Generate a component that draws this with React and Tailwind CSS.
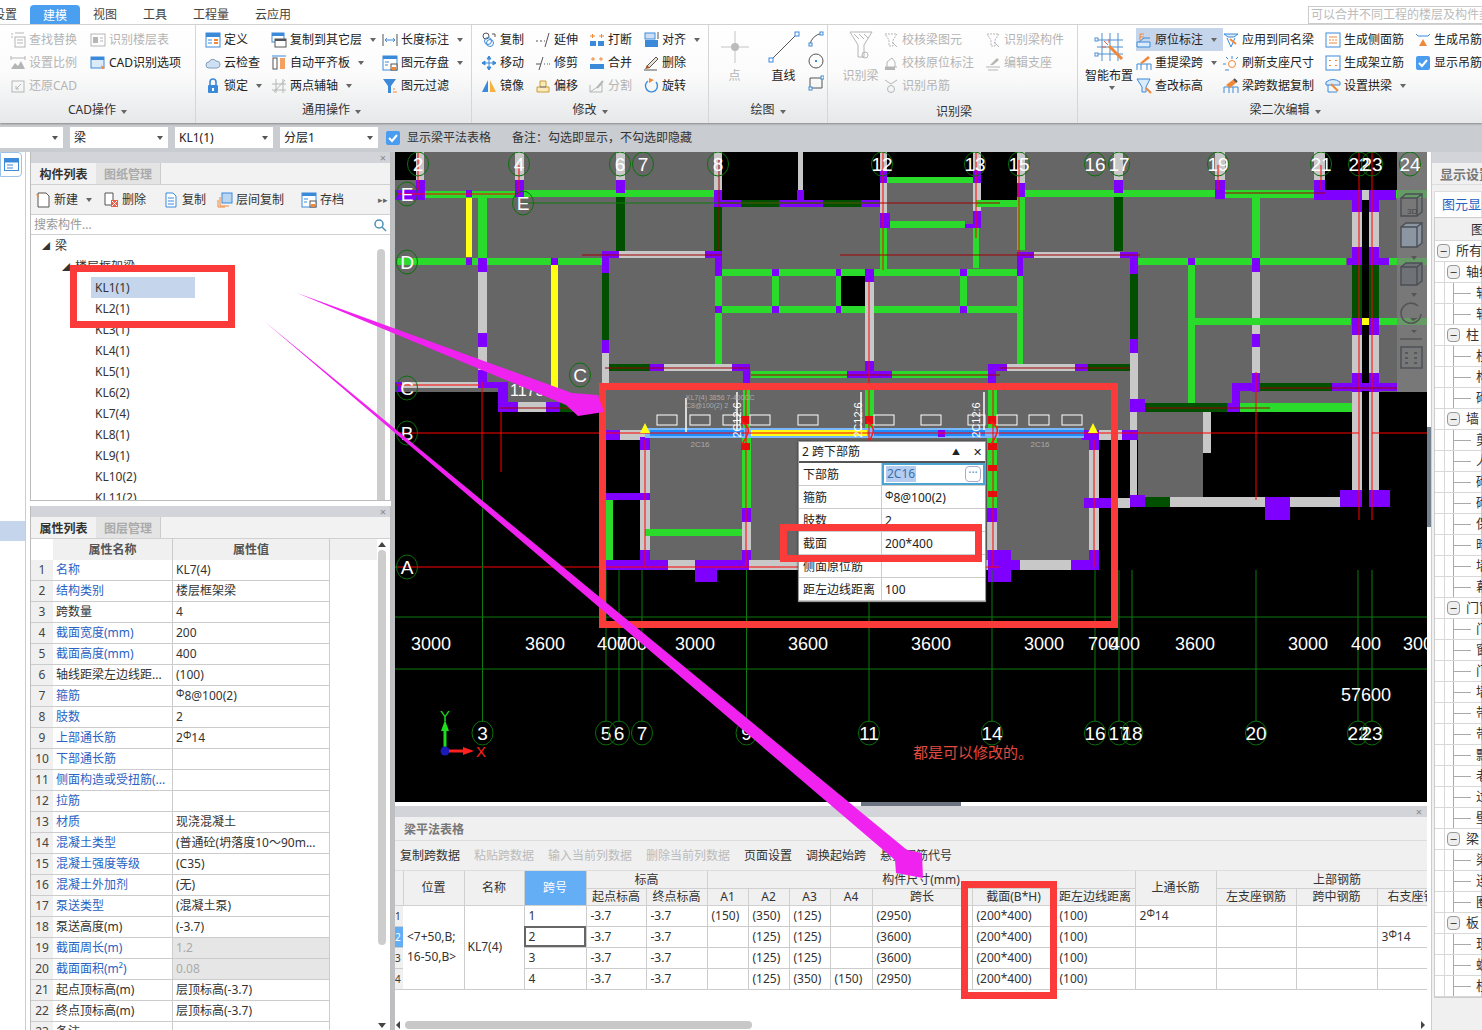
import React from "react";

const BLUE = "#3b8ad9";
const ORG = "#f0883a";
const GR = "#b5b5b5";
const DK = "#555";

// ribbon icons, all drawn on a 16x16 box
const ICONS = {
  find: <><rect x="5" y="5" width="10" height="10" fill="none" stroke={GR} /><path d="M7 8h6M7 11h6M1 2h2M1 5h2M5 1h9" stroke={GR} /></>,
  scale: <><path d="M1 14l4-6 3 3 3-5 4 8z" fill={GR} /><path d="M1 3h14M1 1v4M15 1v4" stroke={GR} /></>,
  undo: <><rect x="2" y="3" width="12" height="11" fill="none" stroke={GR} /><path d="M11 6L6 11M6 8v3h3" stroke={GR} fill="none" /></>,
  floor: <><rect x="1" y="2" width="14" height="12" fill="none" stroke={GR} /><rect x="3" y="5" width="5" height="6" fill={GR} /><path d="M10 6h3M10 9h3" stroke={GR} /></>,
  cad: <><rect x="1" y="2" width="13" height="11" fill="#dcebfa" stroke={BLUE} /><rect x="1" y="2" width="13" height="3" fill={BLUE} /><path d="M11 10l4 3-3 1z" fill={ORG} /></>,
  def: <><rect x="1" y="1" width="14" height="14" fill="#fff" stroke={BLUE} /><rect x="1" y="1" width="14" height="4" fill={BLUE} /><path d="M3 8h4M3 11h4" stroke={BLUE} /><path d="M9 8h4M9 11h4" stroke={ORG} strokeWidth="2" /></>,
  cloud: <path d="M4 13a3 3 0 010-6 4 4 0 017-1 3.5 3.5 0 011 7z" fill="#cfe0f2" stroke="#7f9dbd" />,
  lock: <><path d="M5 7V4a3 3 0 016 0v3" fill="none" stroke={BLUE} strokeWidth="1.6" /><rect x="3" y="7" width="10" height="8" rx="1" fill={BLUE} /><rect x="7" y="10" width="2" height="3" fill="#fff" /></>,
  copyf: <><rect x="1" y="1" width="12" height="9" fill="#fff" stroke={BLUE} /><rect x="1" y="1" width="12" height="3" fill={BLUE} /><rect x="4" y="7" width="11" height="8" fill="#fff" stroke={DK} /><rect x="4" y="7" width="11" height="2" fill={DK} /></>,
  align: <><rect x="2" y="3" width="4" height="11" fill="#fff" stroke={DK} /><rect x="9" y="3" width="5" height="11" fill={ORG} opacity="0.8" /><path d="M1 1h14" stroke={BLUE} /></>,
  axis: <path d="M1 12h14M1 6h14M5 1v14M12 1v14M3 14L14 2" stroke={GR} fill="none" />,
  len: <><path d="M1 2v12M15 2v12" stroke={DK} /><path d="M3 8h10M3 8l2-2M3 8l2 2M13 8l-2-2M13 8l-2 2" stroke={BLUE} fill="none" /></>,
  save: <><rect x="1" y="1" width="14" height="14" fill="#fff" stroke={BLUE} /><rect x="1" y="1" width="14" height="3" fill={BLUE} /><path d="M3 7h4M3 10h3" stroke={BLUE} /><rect x="9" y="9" width="6" height="6" fill="#fff" stroke={DK} /><rect x="10" y="12" width="4" height="3" fill={ORG} /></>,
  filter: <><path d="M1 1h13L9 8v7H6V8z" fill={BLUE} /><path d="M11 14h4M11 11h2" stroke={ORG} /></>,
  dup: <><circle cx="5" cy="4" r="3" fill="none" stroke={DK} /><circle cx="9" cy="11" r="3.5" fill="none" stroke={BLUE} /><circle cx="7" cy="9" r="3.5" fill="none" stroke={BLUE} /><path d="M11 2h3v3" stroke={DK} fill="none" /></>,
  move: <path d="M8 1v14M1 8h14M8 1L6 4h4zM8 15l-2-3h4zM1 8l3-2v4zM15 8l-3-2v4z" fill={BLUE} stroke={BLUE} />,
  mirror: <><path d="M7 2v12H1z" fill={BLUE} /><path d="M9 2v12h6z" fill="#f5b23e" /></>,
  extend: <path d="M1 9h2M5 9h2M9 9h1M14 1L10 15" stroke={DK} fill="none" />,
  trim: <path d="M1 9h5M9 9h1M12 9h1M14 9h1M8 2L4 15" stroke={DK} fill="none" />,
  offset: <><path d="M2 14V9h3V3h6v6h3v5z" fill="#fbe9b8" stroke="#c69c3c" /><path d="M5 9h6" stroke={DK} /></>,
  brk: <><rect x="1" y="9" width="6" height="5" fill={BLUE} /><rect x="9" y="9" width="6" height="5" fill={BLUE} /><path d="M1 4h5M3.5 2v4M10 4h5M12.5 2v4" stroke={ORG} /></>,
  merge: <><rect x="1" y="9" width="14" height="5" fill={BLUE} /><path d="M2 4h4M4 2v4M10 4h4M12 2v4" stroke={ORG} /></>,
  split: <><path d="M1 14h12V6L1 14zM1 14V7" fill="none" stroke={GR} /><path d="M8 10l6-7" stroke={GR} strokeWidth="2" /></>,
  alg: <><rect x="2" y="1" width="10" height="6" fill="#cfe0f5" stroke={BLUE} /><rect x="2" y="8" width="13" height="7" fill={BLUE} /><path d="M15 0v7" stroke={DK} /></>,
  erase: <><path d="M4 11l9-9 2 2-9 9z" fill="#e9e3d5" stroke={DK} /><path d="M2 14l2-4 3 3z" fill="#a8542a" /><path d="M1 15h13" stroke={DK} /></>,
  rot: <><path d="M5 3a6 6 0 108 1" fill="none" stroke={BLUE} strokeWidth="1.4" /><path d="M6 0l5 2-5 3z" fill={ORG} /></>,
  chk: <><path d="M2 2h12l-4 6v6H6V8z" fill="none" stroke={GR} strokeDasharray="2 1" /><path d="M9 10l5 5" stroke={GR} /></>,
  chk2: <><path d="M2 12h12M4 12V7l5-4 3 4v5" fill="none" stroke={GR} /><rect x="2" y="12" width="10" height="3" fill={GR} /></>,
  hang: <><path d="M2 2l6 4 6-4" fill="none" stroke={GR} /><circle cx="8" cy="11" r="3.5" fill="none" stroke={GR} /></>,
  edit: <><path d="M1 12h14M3 15h10" stroke={GR} /><path d="M5 10l7-7 2 2-6 5z" fill={GR} /></>,
  orig: <><path d="M1 10h13v5H1z" fill="#dcebfa" stroke={BLUE} /><path d="M3 10l5-4h6" fill="none" stroke={BLUE} /><path d="M4 2v6M4 2h4M4 5h4" stroke={ORG} /></>,
  lift: <><path d="M1 15V9h14v6M5 15V9M11 15V9" fill="none" stroke={BLUE} /><path d="M4 8l8-7 2 2-8 6z" fill={ORG} /></>,
  chg: <><path d="M1 1h13L10 9v5H6V9z" fill="#dcebfa" stroke={BLUE} /><path d="M10 10l5 5" stroke={ORG} strokeWidth="2" /></>,
  app: <><path d="M1 2h14l-4 3H5z" fill="#dcebfa" stroke={BLUE} /><path d="M4 6l4 9 4-9" fill="none" stroke={BLUE} /><path d="M7 7l6 5" stroke={ORG} strokeWidth="2" /></>,
  ref: <><circle cx="9" cy="9" r="3.5" fill="none" stroke={ORG} /><path d="M9 1v3M3 9H0M5 4L3 2M13 4l2-2M2 15h4" stroke={BLUE} /></>,
  cpy: <><path d="M1 15V9h14v6M6 15V9M10 15V9" fill="none" stroke={BLUE} /><path d="M3 7l8-6 3 3-7 6z" fill={ORG} /><path d="M11 1l3 3" stroke={DK} strokeWidth="2" /></>,
  side: <><rect x="1" y="1" width="14" height="14" fill="#fff" stroke={BLUE} /><path d="M4 5h8M4 11h8" stroke={ORG} /><path d="M4 8h8" stroke={ORG} strokeDasharray="2 1" /></>,
  rack: <><rect x="1" y="1" width="14" height="14" fill="#fff" stroke={BLUE} /><path d="M5 5v1M11 5v1M5 10v1M11 10v1" stroke={ORG} strokeWidth="2" /></>,
  arch: <><path d="M1 4q7-5 14 0v3H1z" fill="#dcebfa" stroke={BLUE} /><path d="M3 7v7h9" fill="none" stroke={BLUE} /><path d="M6 6l7 7" stroke={ORG} strokeWidth="2" /></>,
  hg: <><path d="M1 2l2 2h10l2-2" fill="none" stroke={BLUE} /><path d="M4 14h8L8 7z" fill={ORG} /></>,
  check: <><rect x="1" y="1" width="14" height="14" rx="2" fill="#4a9cf0" /><path d="M4 8l3 3 5-6" stroke="#fff" strokeWidth="2" fill="none" /></>,
  newd: <><path d="M3 1h8l3 3v11H3z" fill="#fff" stroke={DK} /><path d="M1 2l3 1-1 3" fill={ORG} /></>,
  del: <><path d="M2 1h8v12H2z" fill="#fff" stroke={DK} /><rect x="8" y="8" width="7" height="7" fill="#e8604c" /><path d="M9 9l5 5M14 9l-5 5" stroke="#fff" /></>,
  copyd: <><path d="M3 1h7l3 3v11H3z" fill="#fff" stroke={BLUE} /><path d="M5 6h6M5 9h6M5 12h6" stroke={BLUE} /></>,
  lay: <><rect x="5" y="1" width="10" height="10" fill="#bcd6f2" stroke={BLUE} /><path d="M3 5v9h9M1 8v7h7" fill="none" stroke={ORG} /></>,
};

const Ic = ({ n, s = 16 }) => (
  <svg width={s} height={s} viewBox="0 0 16 16" className="shrink-0">{ICONS[n]}</svg>
);

const Caret = ({ c = "#666" }) => (
  <span className="inline-block ml-[5px] w-0 h-0 border-x-[3.5px] border-x-transparent border-t-[4px]" style={{ borderTopColor: c }} />
);

const Steel = () => <span className="text-[10px] relative top-[-3px]">Φ</span>;

function RItem({ n, t, off, caret, hi }) {
  return (
    <div className={`h-[23px] flex items-center gap-[3px] whitespace-nowrap ${hi ? "bg-[#c5d6ec]" : ""} ${off ? "text-[#b4b4b4]" : "text-[#222]"}`}>
      <Ic n={n} />
      <span>{t}</span>
      {caret && <Caret />}
    </div>
  );
}

function Group({ w, pl, label, labelCls = "justify-center", children, last }) {
  return (
    <div className={`h-full flex flex-col shrink-0 ${last ? "" : "border-r border-[#d4d6d8]"}`} style={{ width: w }}>
      <div className="flex flex-1 pt-[3px]" style={{ paddingLeft: pl }}>{children}</div>
      <div className={`h-[26px] flex items-center text-[#333] ${labelCls}`}>{label}</div>
    </div>
  );
}

const Col = ({ w, items }) => (
  <div className="shrink-0" style={{ width: w }}>
    {items.map((it) => <RItem key={it.t} {...it} />)}
  </div>
);

const Big = ({ w, t, off, children, caret }) => (
  <div className={`shrink-0 flex flex-col items-center ${off ? "text-[#b4b4b4]" : "text-[#222]"}`} style={{ width: w }}>
    <div className="h-[37px] flex items-center justify-center">{children}</div>
    <div className="mt-[1px] leading-[20px] whitespace-nowrap">{t}</div>
    {caret && <Caret />}
  </div>
);

function Ribbon() {
  return (
    <div className="h-[98px] flex text-[12px] bg-gradient-to-b from-white via-[#fbfbfb] to-[#e6e8ea] shadow-[0_1px_2px_#888] relative">
      <Group w={196} pl={10} label={<span>CAD操作<Caret /></span>}>
        <Col w={80} items={[{ n: "find", t: "查找替换", off: 1 }, { n: "scale", t: "设置比例", off: 1 }, { n: "undo", t: "还原CAD", off: 1 }]} />
        <Col w={100} items={[{ n: "floor", t: "识别楼层表", off: 1 }, { n: "cad", t: "CAD识别选项" }]} />
      </Group>
      <Group w={276} pl={9} label={<span className="ml-[-4px]">通用操作<Caret /></span>}>
        <Col w={66} items={[{ n: "def", t: "定义" }, { n: "cloud", t: "云检查" }, { n: "lock", t: "锁定", caret: 1 }]} />
        <Col w={111} items={[{ n: "copyf", t: "复制到其它层", caret: 1 }, { n: "align", t: "自动平齐板", caret: 1 }, { n: "axis", t: "两点辅轴", caret: 1 }]} />
        <Col w={85} items={[{ n: "len", t: "长度标注", caret: 1 }, { n: "save", t: "图元存盘", caret: 1 }, { n: "filter", t: "图元过滤" }]} />
      </Group>
      <Group w={237} pl={9} label={<span>修改<Caret /></span>}>
        <Col w={54} items={[{ n: "dup", t: "复制" }, { n: "move", t: "移动" }, { n: "mirror", t: "镜像" }]} />
        <Col w={54} items={[{ n: "extend", t: "延伸" }, { n: "trim", t: "修剪" }, { n: "offset", t: "偏移" }]} />
        <Col w={54} items={[{ n: "brk", t: "打断" }, { n: "merge", t: "合并" }, { n: "split", t: "分割", off: 1 }]} />
        <Col w={62} items={[{ n: "alg", t: "对齐", caret: 1 }, { n: "erase", t: "删除" }, { n: "rot", t: "旋转" }]} />
      </Group>
      <Group w={119} label={<span>绘图<Caret /></span>}>
        <Big w={51} t="点" off>
          <svg width="32" height="36" viewBox="0 0 32 36"><path d="M16 2v32M2 18h28" stroke="#c4c4c4" /><circle cx="16" cy="18" r="4" fill="#bbb" /></svg>
        </Big>
        <Big w={47} t="直线">
          <svg width="32" height="34" viewBox="0 0 32 34"><path d="M3 30L29 4" stroke="#555" /><rect x="1" y="28" width="4" height="4" fill="#fff" stroke={BLUE} /><rect x="27" y="2" width="4" height="4" fill="#fff" stroke={BLUE} /></svg>
        </Big>
        <div className="flex flex-col items-center gap-[6px] pt-[3px] w-[18px]">
          <svg width="16" height="16" viewBox="0 0 16 16"><path d="M2 14Q3 5 14 2" fill="none" stroke={DK} /><rect x="1" y="12" width="3" height="3" fill="#fff" stroke={BLUE} /><rect x="12" y="1" width="3" height="3" fill="#fff" stroke={BLUE} /></svg>
          <svg width="16" height="16" viewBox="0 0 16 16"><circle cx="8" cy="8" r="7" fill="none" stroke={DK} /><rect x="7" y="7" width="2" height="2" fill={BLUE} /></svg>
          <svg width="16" height="16" viewBox="0 0 16 16"><path d="M2 3h12v10H2z" fill="none" stroke={DK} /><rect x="13" y="1" width="3" height="3" fill="#fff" stroke={BLUE} /><rect x="1" y="12" width="3" height="3" fill="#fff" stroke={BLUE} /></svg>
        </div>
      </Group>
      <Group w={250} pl={10} label={<span className="ml-[108px] mt-[3px]">识别梁</span>} labelCls="justify-start">
        <Big w={45} t="识别梁" off>
          <svg width="24" height="32" viewBox="0 0 24 32"><path d="M1 1h22l-8 13v12H9V14z" fill="none" stroke={GR} /><path d="M5 3l5 5M10 3l5 5M15 3l4 4" stroke={GR} /><circle cx="16" cy="24" r="3" fill="none" stroke={GR} /></svg>
        </Big>
        <Col w={102} items={[{ n: "chk", t: "校核梁图元", off: 1 }, { n: "chk2", t: "校核原位标注", off: 1 }, { n: "hang", t: "识别吊筋", off: 1 }]} />
        <Col w={88} items={[{ n: "chk", t: "识别梁构件", off: 1 }, { n: "edit", t: "编辑支座", off: 1 }]} />
      </Group>
      <Group w={404} pl={7} last label={<span className="ml-[10px]">梁二次编辑<Caret /></span>}>
        <Big w={48} t="智能布置" caret>
          <svg width="34" height="34" viewBox="0 0 34 34"><path d="M5 10h26M5 17h26M5 24h26M10 3v28M18 3v28M26 3v28" stroke="#4f8fcf" /><rect x="3" y="8" width="3" height="3" fill="#fff" stroke="#4f8fcf" /><rect x="3" y="23" width="3" height="3" fill="#fff" stroke="#4f8fcf" /><path d="M17 16l13 13" stroke={ORG} strokeWidth="3" /><path d="M12 11l4 4M17 9v4M10 17h4" stroke="#e8604c" /></svg>
        </Big>
        <div className="shrink-0 w-[90px] pl-[3px]">
          <RItem n="orig" t="原位标注" caret hi />
          <RItem n="lift" t="重提梁跨" caret />
          <RItem n="chg" t="查改标高" />
        </div>
        <Col w={102} items={[{ n: "app", t: "应用到同名梁" }, { n: "ref", t: "刷新支座尺寸" }, { n: "cpy", t: "梁跨数据复制" }]} />
        <Col w={90} items={[{ n: "side", t: "生成侧面筋" }, { n: "rack", t: "生成架立筋" }, { n: "arch", t: "设置拱梁", caret: 1 }]} />
        <div className="shrink-0 w-[70px]">
          <RItem n="hg" t="生成吊筋" />
          <RItem n="check" t="显示吊筋" />
        </div>
      </Group>
    </div>
  );
}

const Select = ({ w, t }) => (
  <div className="h-[21px] bg-white flex items-center justify-between px-[4px] text-[#222]" style={{ width: w }}>
    <span>{t}</span>
    <span className="w-0 h-0 border-x-[3px] border-x-transparent border-t-[4px] border-t-[#555] mr-[1px]" />
  </div>
);

const TabTop = ({ title, second }) => (
  <>
    <div className="h-[11px] bg-[#d2d4d9] text-[#888] text-[11px] leading-[11px] text-right pr-[4px] shrink-0">×</div>
    <div className="h-[22px] flex bg-[#f2f2f2] border-b border-[#d0d0d0] shrink-0">
      <div className="w-[65px] text-center font-bold text-[#333] leading-[24px]">{title}</div>
      <div className="w-[65px] text-center text-[#aaa] font-bold bg-[#e4e4e4] border-r border-[#ccc] leading-[24px]">{second}</div>
    </div>
  </>
);

const KL = ["KL1(1)", "KL2(1)", "KL3(1)", "KL4(1)", "KL5(1)", "KL6(2)", "KL7(4)", "KL8(1)", "KL9(1)", "KL10(2)", "KL11(2)"];

function ListPanel() {
  return (
    <div className="h-[349px] flex flex-col border-x border-b border-[#bcbcbc] shrink-0 overflow-hidden relative">
      <TabTop title="构件列表" second="图纸管理" />
      <div className="h-[30px] flex items-center bg-[#f2f2f2] border-b border-[#d0d0d0] pl-[4px] pt-[1px] text-[#333] shrink-0 relative">
        <div className="flex items-center gap-[3px] w-[68px]"><Ic n="newd" /><span>新建</span><Caret /></div>
        <div className="flex items-center gap-[3px] w-[60px]"><Ic n="del" /><span>删除</span></div>
        <div className="flex items-center gap-[3px] w-[54px]"><Ic n="copyd" /><span>复制</span></div>
        <div className="flex items-center gap-[3px] w-[84px]"><Ic n="lay" /><span>层间复制</span></div>
        <div className="flex items-center gap-[3px]"><Ic n="save" /><span>存档</span></div>
        <span className="absolute right-[2px] text-[#666] text-[9px]">▸▸</span>
      </div>
      <div className="h-[20px] flex items-center justify-between border-b border-[#d0d0d0] px-[3px] pt-[1px] text-[#999] shrink-0">
        <span>搜索构件...</span>
        <svg width="14" height="14" viewBox="0 0 14 14"><circle cx="6" cy="6" r="4" fill="none" stroke="#4b8fb5" strokeWidth="1.5" /><path d="M9 9l4 4" stroke="#4b8fb5" strokeWidth="1.5" /></svg>
      </div>
      <div className="flex-1 relative text-[#333]">
        <div className="h-[21px] flex items-center pl-[11px]"><span className="text-[8px] w-[13px]">◢</span>梁</div>
        <div className="h-[21px] flex items-center pl-[31px]"><span className="text-[8px] w-[13px]">◢</span>楼层框架梁</div>
        {KL.map((k, i) => (
          <div key={k} className={`h-[21px] leading-[21px] ml-[60px] w-[104px] pl-[4px] ${i === 0 ? "bg-[#c5d6ec]" : ""}`}>{k}</div>
        ))}
        <div className="absolute right-[5px] top-[14px] bottom-[-2px] w-[8px] rounded bg-[#cdcdcd]" />
      </div>
    </div>
  );
}

const PROPS = [
  ["名称", 1, "KL7(4)"], ["结构类别", 1, "楼层框架梁"], ["跨数量", 0, "4"], ["截面宽度(mm)", 1, "200"], ["截面高度(mm)", 1, "400"],
  ["轴线距梁左边线距...", 0, "(100)"], ["箍筋", 1, <><Steel />8@100(2)</>], ["肢数", 1, "2"], ["上部通长筋", 1, <>2<Steel />14</>],
  ["下部通长筋", 1, ""], ["侧面构造或受扭筋(...", 1, ""], ["拉筋", 1, ""], ["材质", 1, "现浇混凝土"], ["混凝土类型", 1, "(普通砼(坍落度10～90m..."],
  ["混凝土强度等级", 1, "(C35)"], ["混凝土外加剂", 1, "(无)"], ["泵送类型", 1, "(混凝土泵)"], ["泵送高度(m)", 0, "(-3.7)"],
  ["截面周长(m)", 1, "1.2", 1], ["截面面积(m²)", 1, "0.08", 1], ["起点顶标高(m)", 0, "层顶标高(-3.7)"], ["终点顶标高(m)", 0, "层顶标高(-3.7)"], ["备注", 0, ""],
];

function PropPanel() {
  return (
    <div className="flex-1 flex flex-col border-x border-[#bcbcbc] overflow-hidden relative">
      <TabTop title="属性列表" second="图层管理" />
      <div className="flex h-[21px] shrink-0 bg-white text-[#555] font-bold">
        <div className="w-[22px]" />
        <div className="w-[120px] text-center leading-[21px] bg-[#f0f0f0] border-r border-[#ccc]">属性名称</div>
        <div className="w-[157px] text-center leading-[21px] bg-[#f0f0f0] border-r border-[#ccc]">属性值</div>
        <div className="w-[47px] bg-[#f0f0f0]" />
      </div>
      {PROPS.map((p, i) => (
        <div key={p[0]} className="flex h-[21px] shrink-0 leading-[20px]">
          <div className="w-[22px] text-center bg-[#f0f0f0] border-b border-[#ccc] text-[#444]">{i + 1}</div>
          <div className={`w-[120px] pl-[3px] border-b border-r border-[#ccc] whitespace-nowrap ${p[1] ? "text-[#2a62c4]" : "text-[#333]"}`}>{p[0]}</div>
          <div className={`w-[157px] pl-[3px] border-b border-r border-[#ccc] whitespace-nowrap ${p[3] ? "bg-[#e6e6e6] text-[#aaa]" : "text-[#333]"}`}>{p[2]}</div>
        </div>
      ))}
      <div className="absolute right-[4px] top-[33px] bottom-0 w-[8px] flex flex-col items-center">
        <span className="w-0 h-0 border-x-[4px] border-x-transparent border-b-[5px] border-b-[#444] mt-[3px]" />
        <div className="w-[8px] h-[395px] bg-[#cdcdcd] rounded mt-[3px]" />
        <span className="w-0 h-0 border-x-[4px] border-x-transparent border-t-[5px] border-t-[#444] mt-auto mb-[2px]" />
      </div>
    </div>
  );
}

// canvas shapes, [x0, x1, y0, y1, colour], in page coordinates
const P = "#8000ff", L = "#c8c8c8", G = "#2bdb2b", D = "#005000", Y = "#ffff14", K = "#000", S = "#666666", U = "#1e8cff";
const SHAPES = [
  [395, 1427, 152, 392, S], [498, 1352, 392, 412, S], [600, 1138, 412, 440, S], [1138, 1203, 412, 497, S], [650, 742, 437, 560, S], [751, 988, 437, 560, S], [997, 1089, 437, 560, S],
  [395, 416, 152, 180, K], [722, 798, 152, 200, K], [803, 880, 152, 200, K], [887, 973, 152, 177, K], [981, 1017, 152, 200, K], [1325, 1397, 152, 190, K], [841, 865, 276, 306, K],
  // E row
  [416, 424, 152, 180, L], [395, 425, 190, 200, P], [416, 425, 180, 190, P], [425, 515, 191, 198, G], [466, 472, 190, 197, P], [466, 472, 198, 257, Y], [478, 487, 198, 260, G],
  [515, 524, 152, 180, L], [515, 524, 180, 197, P], [524, 715, 190, 197, G], [616, 625, 152, 180, L], [616, 625, 180, 193, P], [616, 625, 197, 251, D],
  [714, 722, 152, 190, L], [714, 722, 190, 207, P], [714, 722, 207, 251, D], [722, 881, 200, 207, P], [741, 779, 200, 207, D], [823, 861, 200, 207, D], [798, 803, 152, 190, L], [797, 804, 190, 200, P],
  [880, 887, 152, 170, L], [880, 887, 170, 183, P], [880, 887, 183, 213, L], [880, 890, 213, 228, P], [887, 973, 177, 183, G], [890, 965, 221, 228, G], [880, 887, 228, 270, G],
  [973, 981, 152, 170, L], [973, 981, 170, 183, P], [973, 981, 183, 211, L], [973, 981, 211, 228, P], [965, 975, 224, 228, P], [976, 1018, 200, 207, G], [973, 979, 228, 268, G],
  // D row
  [397, 602, 258, 265, G], [466, 472, 258, 265, P], [478, 487, 258, 272, P], [551, 558, 258, 265, P], [551, 558, 265, 399, Y], [478, 487, 272, 333, L], [478, 487, 333, 347, P], [478, 487, 347, 370, L], [478, 487, 370, 383, P],
  [402, 478, 382, 388, L], [395, 402, 382, 404, P], [478, 508, 382, 388, P],
  [395, 498, 392, 600, K], [395, 600, 412, 802, K], [498, 508, 383, 412, P], [518, 546, 402, 412, L], [498, 518, 402, 412, P], [546, 560, 402, 412, P], [560, 579, 402, 412, D],
  // middle rooms
  [602, 619, 251, 258, P], [619, 705, 251, 258, L], [705, 722, 251, 258, P], [602, 609, 251, 273, P], [602, 609, 273, 340, D], [602, 609, 340, 353, P], [602, 609, 353, 383, L],
  [715, 722, 258, 276, P], [715, 722, 276, 367, G], [715, 722, 306, 313, P],
  [722, 836, 269, 276, G], [772, 779, 269, 276, P], [836, 841, 269, 276, P], [841, 865, 269, 276, G], [865, 874, 269, 282, P], [874, 1017, 269, 276, G], [960, 967, 269, 276, P],
  [722, 1017, 306, 313, G], [772, 779, 306, 313, P], [836, 841, 306, 313, P], [960, 967, 306, 313, P], [772, 779, 276, 306, G], [836, 841, 276, 306, G], [960, 967, 276, 306, G],
  [865, 874, 282, 361, L], [865, 874, 361, 373, P], [609, 650, 364, 371, D], [650, 664, 364, 371, P], [664, 732, 364, 371, L], [732, 750, 364, 371, P], [743, 750, 371, 383, P],
  [751, 847, 371, 378, G], [847, 892, 371, 378, P], [892, 990, 371, 378, G], [990, 1000, 364, 371, P],
  // right side
  [1017, 1025, 152, 183, L], [1017, 1025, 183, 197, P], [1017, 1025, 197, 250, G], [1017, 1034, 252, 258, P], [1034, 1120, 252, 258, L], [1120, 1138, 252, 258, P], [1017, 1023, 258, 276, P], [1017, 1023, 276, 365, G],
  [988, 1007, 364, 371, P], [1007, 1075, 364, 371, L], [1075, 1088, 364, 371, P], [1088, 1130, 364, 371, D], [988, 996, 371, 383, P],
  [1025, 1215, 190, 197, G], [1114, 1123, 152, 180, L], [1114, 1123, 180, 193, P], [1114, 1123, 197, 251, D], [1215, 1225, 152, 180, L], [1215, 1225, 180, 199, P], [1225, 1315, 190, 198, G],
  [1314, 1325, 152, 180, L], [1314, 1325, 180, 200, P], [1325, 1396, 190, 200, P], [1396, 1427, 190, 198, G], [1352, 1362, 200, 212, P], [1369, 1379, 200, 212, P], [1362, 1369, 200, 392, K], [1362, 1369, 190, 200, L],
  [1352, 1362, 212, 247, L], [1369, 1379, 212, 247, L], [1352, 1362, 247, 265, P], [1369, 1379, 247, 265, P], [1352, 1362, 265, 318, D], [1369, 1379, 265, 318, D], [1352, 1362, 318, 335, P], [1369, 1379, 318, 335, P],
  [1352, 1362, 335, 373, L], [1369, 1379, 335, 373, L], [1352, 1362, 373, 392, P], [1369, 1379, 373, 392, P],
  [1138, 1346, 258, 265, G], [1188, 1195, 258, 265, P], [1252, 1260, 258, 272, P], [1347, 1362, 258, 265, P], [1369, 1389, 258, 265, P], [1389, 1427, 258, 265, G],
  [1130, 1138, 252, 274, P], [1130, 1138, 274, 339, D], [1130, 1138, 339, 353, P], [1130, 1138, 353, 400, L], [1130, 1145, 399, 412, P],
  [1252, 1260, 198, 258, G], [1252, 1260, 272, 318, L], [1195, 1351, 318, 325, G], [1362, 1369, 318, 325, Y], [1379, 1427, 318, 325, G], [1252, 1260, 325, 334, L], [1252, 1260, 334, 347, P], [1252, 1260, 347, 373, L], [1252, 1260, 373, 392, P],
  [1188, 1195, 265, 407, G], [1232, 1260, 383, 391, P], [1260, 1332, 383, 391, D], [1332, 1397, 383, 391, P],
  [1145, 1227, 403, 412, D], [1227, 1240, 403, 412, P], [1232, 1240, 383, 412, P], [1240, 1358, 403, 412, G], [1203, 1211, 412, 453, L],
  [1352, 1362, 392, 490, L], [1369, 1379, 392, 490, L],
  // B row
  [606, 620, 430, 440, P], [620, 645, 430, 440, L], [640, 650, 437, 450, P], [640, 650, 450, 550, L], [640, 650, 550, 570, P],
  [606, 650, 493, 500, P], [606, 613, 500, 560, G], [645, 746, 529, 536, G], [742, 751, 438, 508, G], [742, 751, 508, 522, P], [742, 751, 522, 550, L], [742, 751, 550, 570, P],
  [606, 668, 560, 570, P], [668, 695, 560, 570, L], [695, 717, 560, 582, P], [717, 749, 560, 570, P], [749, 988, 560, 570, L],
  [987, 997, 438, 508, G], [987, 997, 508, 522, P], [987, 997, 522, 550, L], [988, 1011, 550, 582, P], [1011, 1020, 560, 570, P], [1020, 1071, 560, 570, L], [1071, 1099, 560, 570, P],
  [1089, 1099, 438, 450, P], [1089, 1099, 450, 550, L], [1089, 1099, 550, 570, P], [1082, 1099, 430, 440, P], [1099, 1122, 430, 440, L], [1122, 1138, 430, 440, P],
  [1130, 1137, 412, 430, L], [1130, 1137, 440, 497, L], [1130, 1145, 495, 507, P], [1145, 1170, 497, 507, D], [1170, 1265, 497, 507, L], [1265, 1290, 497, 520, P], [1290, 1340, 497, 507, L], [1340, 1362, 490, 507, P], [1369, 1390, 490, 507, P],
  [1084, 1117, 498, 508, P], [1117, 1130, 498, 508, L],
  [645, 1084, 428, 438, "#79b8ff"], [650, 744, 430, 436, U], [751, 867, 430, 436, Y], [874, 985, 430, 436, U], [999, 1084, 430, 436, U], [938, 945, 430, 437, P],
  [865, 874, 390, 428, G], [743, 750, 390, 428, G], [988, 997, 390, 428, G],
  [741, 750, 416, 424, "#e01010"], [741, 750, 443, 450, "#e01010"], [865, 874, 416, 424, "#e01010"], [988, 997, 416, 424, "#e01010"], [988, 997, 443, 450, "#e01010"], [988, 997, 465, 471, "#e01010"], [988, 997, 491, 497, "#e01010"],
];

// thin lines, [x1, y1, x2, y2, colour]
const R = "#ff0000", DR = "#a00000", GL = "#0d7a0d";
const LINES = [
  [395, 433, 1211, 433, R], [1211, 433, 1359, 433, R], [1372, 433, 1427, 433, R], [395, 567, 1000, 567, R], [395, 194, 515, 194, R], [1225, 193, 1325, 193, DR],
  [418, 152, 418, 190, R], [519, 165, 519, 195, R], [482, 382, 482, 480, R], [501, 412, 501, 472, R], [395, 385, 480, 385, R], [500, 408, 590, 408, DR],
  [582, 255, 722, 255, DR], [840, 255, 1140, 255, DR], [719, 160, 719, 250, DR], [720, 203, 1000, 203, DR], [883, 152, 883, 270, R],
  [976, 152, 976, 238, R], [1019, 160, 1019, 255, R], [1218, 165, 1218, 190, R], [1321, 165, 1321, 190, R], [1359, 152, 1359, 520, R], [1372, 152, 1372, 520, R], [1256, 372, 1256, 500, R],
  [605, 368, 750, 368, DR], [1000, 368, 1130, 368, DR], [751, 375, 1000, 375, DR], [1260, 388, 1397, 388, DR], [1145, 408, 1270, 408, DR],
  [869, 281, 869, 440, R], [746, 390, 746, 567, R], [993, 390, 993, 567, R], [1094, 440, 1094, 567, R], [645, 440, 645, 567, R],
  [395, 617, 1427, 617, GL], [395, 669, 1427, 669, GL], [523, 203, 880, 203, GL], [482.5, 480, 482.5, 570, GL],
  ...[482.5, 606, 619, 642, 746.5, 869, 992, 1095, 1119, 1132, 1256, 1358, 1372].map((x) => [x, 570, x, 722, GL]),
];

const TOPS = [[418, "2"], [519, "4"], [620, "6"], [643, "7"], [718, "8"], [882, "12"], [975, "13"], [1019, "15"], [1095, "16"], [1119, "17"], [1218, "19"], [1321, "21"], [1359, "22"], [1372, "23"], [1410, "24"]];
const BOTS = [[482.5, "3"], [606, "5"], [619, "6"], [642, "7"], [746.5, "9"], [869, "11"], [992, "14"], [1095, "16"], [1119, "17"], [1132, "18"], [1256, "20"], [1358, "22"], [1372, "23"]];
const SIDES = [[407, 194, "E"], [523, 203, "E"], [407, 262, "D"], [407, 388, "C"], [580, 375, "C"], [407, 433, "B"], [407, 567, "A"]];
const DIMS = [[431, "3000"], [545, "3600"], [612, "400"], [632, "700"], [695, "3000"], [808, "3600"], [931, "3600"], [1044, "3000"], [1103, "700"], [1125, "400"], [1195, "3600"], [1308, "3000"], [1366, "400"], [1423, "3000"]];
const BOXES = [657, 690, 723, 750, 798, 874, 921, 968, 997, 1029, 1062];

const Bubble = ({ x, y, t, sz = 19 }) => (
  <g>
    <ellipse cx={x} cy={y} rx="10.5" ry="12" fill="none" stroke="#0a700a" />
    <text x={x} y={y + sz * 0.36} fontSize={sz} fill="#fff" textAnchor="middle">{t}</text>
  </g>
);

function CadCanvas() {
  return (
    <svg width="1032" height="650" viewBox="395 152 1032 650" className="block bg-black font-['Liberation_Sans',sans-serif]">
      {SHAPES.map((s, i) => <rect key={i} x={s[0]} y={s[2]} width={s[1] - s[0]} height={s[3] - s[2]} fill={s[4]} />)}
      {LINES.map((l, i) => <line key={i} x1={l[0]} y1={l[1]} x2={l[2]} y2={l[3]} stroke={l[4]} strokeWidth="1" />)}
      {BOXES.map((x) => <rect key={x} x={x} y="415" width={x === 723 || x === 968 ? 17 : 20} height="10" fill="none" stroke="#fff" />)}
      {[[686, 398, 432], [861, 392, 430], [984, 392, 430], [737, 392, 430]].map((l) => <line key={l[0]} x1={l[0]} y1={l[1]} x2={l[0]} y2={l[2]} stroke="#fff" strokeWidth="1.5" />)}
      {[[741, 420], [862, 420], [980, 420]].map((p) => (
        <text key={p[0]} x={p[0]} y={p[1]} fontSize="11" fill="#fff" textAnchor="middle" transform={`rotate(-90 ${p[0]} ${p[1]})`}>2C12:6</text>
      ))}
      {[[744, 433], [869, 433], [993, 433]].map((p) => <path key={p[0]} d={`M${p[0] - 2} ${p[1] - 11}q8 5 6 11q-2 6 -6 11`} fill="none" stroke="#ff1a1a" strokeWidth="1.5" />)}
      <path d="M645 423l-5 10h10zM1093 423l-5 10h10z" fill="#ffff14" />
      <text x="686" y="400" fontSize="7" fill="#aaa">KL7(4) 3856 7-400CC</text>
      <text x="686" y="408" fontSize="7" fill="#aaa">C8@100(2) 2</text>
      <text x="700" y="447" fontSize="8" fill="#aaa" textAnchor="middle">2C16</text>
      <text x="1040" y="447" fontSize="8" fill="#aaa" textAnchor="middle">2C16</text>
      <text x="510" y="396" fontSize="16" fill="#fff">1175</text>
      {/* view toolbar */}
      <rect x="1397" y="152" width="30" height="240" fill="#808080" opacity="0.7" />
      <g fill="none" stroke="#4a4f55" strokeWidth="1.4">
        <path d="M1401 198h16v18h-16zM1401 198l5-4h16v18l-5 4M1417 198l5-4" />
        <path d="M1401 227h16v20h-16zM1401 227l5-4h16v20l-5 4M1417 227l5-4" fill="#8c96a3" />
        <path d="M1401 267h16v18h-16zM1401 267l5-4h16v18l-5 4M1417 267l5-4" fill="#6f7378" />
        <path d="M1418 306a10 10 0 103 8" stroke="#555" strokeWidth="1.6" />
        <path d="M1400 339h22" stroke="#555" />
        <rect x="1401" y="347" width="21" height="21" />
        <path d="M1405 353h3M1405 358h3M1405 363h3M1414 353h3M1414 358h3M1414 363h3" />
      </g>
      <text x="1407" y="214" fontSize="8" fill="#444">3D</text>
      <path d="M1413 321l-3-3h8z M1411 256h6l-3 4z M1411 293h6l-3 4z M1411 330h6l-3 3z" fill="#555" />
      {TOPS.map((t) => <Bubble key={t[0]} x={t[0]} y={164} t={t[1]} />)}
      {SIDES.map((t, i) => <Bubble key={i} x={t[0]} y={t[1]} t={t[2]} />)}
      {BOTS.map((t) => <Bubble key={t[0]} x={t[0]} y={733} t={t[1]} />)}
      {DIMS.map((t) => <text key={t[0]} x={t[0]} y="650" fontSize="18" fill="#fff" textAnchor="middle">{t[1]}</text>)}
      <text x="1366" y="701" fontSize="18" fill="#fff" textAnchor="middle">57600</text>
      <text x="913" y="758" fontSize="15" fill="#e04a3f" className="font-['Noto_Sans_CJK_SC',sans-serif]">都是可以修改的。</text>
      {/* axis triad */}
      <path d="M445 751V728" stroke="#1fdc1f" strokeWidth="3" />
      <path d="M445 720l-4 11h8z" fill="#1fdc1f" />
      <text x="445" y="721" fontSize="15" fill="#1fdc1f" textAnchor="middle">Y</text>
      <circle cx="445" cy="751" r="4.5" fill="#1a1ab8" />
      <path d="M449 751h16" stroke="#ff2020" strokeWidth="3" />
      <path d="M474 751l-11-4v8z" fill="#ff2020" />
      <text x="476" y="757" fontSize="15" fill="#ff2020">X</text>
    </svg>
  );
}

function Popup() {
  const rows = [["下部筋", "2C16"], ["箍筋", <><Steel />8@100(2)</>], ["肢数", "2"], ["截面", "200*400"], ["侧面原位筋", ""], ["距左边线距离", "100"]];
  return (
    <div className="absolute left-[403px] top-[289px] w-[188px] bg-white border border-[#999] text-[#222] shadow-[0_0_2px_#333]">
      <div className="h-[21px] flex items-center justify-between px-[3px] pt-[1px] border-b-2 border-[#555]">
        <span>2 跨下部筋</span>
        <span className="flex gap-[13px] text-[11px] items-center"><span className="text-[8px]">▲</span>✕</span>
      </div>
      {rows.map((r, i) => (
        <div key={r[0]} className="flex h-[23px] leading-[24px] border-b border-[#ccc]">
          <div className="w-[83px] pl-[4px] border-r border-[#ccc] whitespace-nowrap">{r[0]}</div>
          {i === 0 ? (
            <div className="flex-1 flex items-center justify-between border-2 border-[#4aa3d0] pl-[2px] pr-[2px]">
              <span className="bg-[#b5cdf0] text-[#3b6fb0] px-[1px] leading-[16px]">2C16</span>
              <span className="w-[16px] h-[16px] border border-[#aac] rounded-sm text-[#6a8fc0] text-center leading-[12px]">···</span>
            </div>
          ) : (
            <div className="flex-1 pl-[3px]">{r[1]}</div>
          )}
        </div>
      ))}
    </div>
  );
}

const SPAN_ROWS = [
  ["1", "-3.7", "-3.7", "(150)", "(350)", "(125)", "", "(2950)", "(200*400)", "(100)", <>2<Steel />14</>, "", "", ""],
  ["2", "-3.7", "-3.7", "", "(125)", "(125)", "", "(3600)", "(200*400)", "(100)", "", "", "", <>3<Steel />14</>],
  ["3", "-3.7", "-3.7", "", "(125)", "(125)", "", "(3600)", "(200*400)", "(100)", "", "", "", ""],
  ["4", "-3.7", "-3.7", "", "(125)", "(350)", "(150)", "(2950)", "(200*400)", "(100)", "", "", "", ""],
];
const COLS = [8, 61, 60, 62, 60, 61, 41, 41, 41, 42, 100, 83, 80, 81, 80, 81, 81];
const TH = "border-r border-b border-[#d0d0d0] bg-[#f0f0f0] font-normal text-[#333] whitespace-nowrap overflow-hidden p-0 leading-[15px]";

function BeamTable() {
  return (
    <div className="flex-1 bg-white text-[12px] relative overflow-hidden">
      <div className="h-[11px] bg-[#d2d4d9] text-[#888] text-[11px] leading-[11px] text-right pr-[5px]">×</div>
      <div className="h-[24px] bg-[#f0f0f0] border-b border-[#ddd] pl-[9px] text-[#777] font-bold leading-[25px]">梁平法表格</div>
      <div className="h-[30px] flex items-center gap-[14px] pl-[5px] bg-[#f0f0f0] border-b border-[#ddd] text-[#333]">
        <span>复制跨数据</span>
        <span className="text-[#bbb]">粘贴跨数据</span>
        <span className="text-[#bbb]">输入当前列数据</span>
        <span className="text-[#bbb]">删除当前列数据</span>
        <span>页面设置</span>
        <span>调换起始跨</span>
        <span>悬挑钢筋代号</span>
      </div>
      <table className="table-fixed border-collapse w-[1063px]">
        <colgroup>{COLS.map((w, i) => <col key={i} style={{ width: w }} />)}</colgroup>
        <thead>
          <tr className="h-[17px] text-center">
            <th rowSpan={2} className={TH} />
            <th rowSpan={2} className={TH}>位置</th>
            <th rowSpan={2} className={TH}>名称</th>
            <th rowSpan={2} className="border-r border-b border-[#d0d0d0] bg-[#63aef5] text-white font-normal p-0">跨号</th>
            <th colSpan={2} className={TH}>标高</th>
            <th colSpan={7} className={TH}>构件尺寸(mm)</th>
            <th rowSpan={2} className={TH}>上通长筋</th>
            <th colSpan={3} className={TH}>上部钢筋</th>
          </tr>
          <tr className="h-[17px] text-center">
            {["起点标高", "终点标高", "A1", "A2", "A3", "A4", "跨长", "截面(B*H)", "距左边线距离", "左支座钢筋", "跨中钢筋", "右支座钢筋"].map((h) => <th key={h} className={TH}>{h}</th>)}
          </tr>
        </thead>
        <tbody>
          {SPAN_ROWS.map((r, i) => (
            <tr key={r[0]} className="h-[21px] text-[#333] leading-[20px]">
              <td className={`p-0 text-[10px] overflow-hidden border-b border-[#ccc] ${i === 1 ? "bg-[#63aef5] text-white" : "bg-[#f0f0f0]"}`}>{r[0]}</td>
              {i === 0 && <td rowSpan={4} className="p-0 pl-[4px] border-r border-b border-[#ccc] leading-[20px] whitespace-nowrap">&lt;7+50,B;<br />16-50,B&gt;</td>}
              {i === 0 && <td rowSpan={4} className="p-0 pl-[3px] border-r border-b border-[#ccc]">KL7(4)</td>}
              {r.map((c, j) => (
                <td key={j} className={`p-0 pl-[4px] border-r border-b border-[#ccc] whitespace-nowrap overflow-hidden ${i === 1 && j === 0 ? "outline-2 -outline-offset-2 outline-[#666]" : ""}`}>{c}</td>
              ))}
            </tr>
          ))}
        </tbody>
      </table>
      <div className="absolute left-0 right-0 bottom-0 h-[10px] flex items-center">
        <span className="w-0 h-0 ml-[1px] border-y-[4px] border-y-transparent border-r-[4px] border-r-[#444]" />
        <div className="ml-[5px] w-[347px] h-[8px] bg-[#c8c8c8] rounded" />
        <span className="w-0 h-0 ml-auto mr-[2px] border-y-[4px] border-y-transparent border-l-[4px] border-l-[#444]" />
      </div>
    </div>
  );
}

const LAYERS = [
  [0, "所有构件"], [1, "轴线"], [2, "轴网"], [2, "轴线标注"], [1, "柱"], [2, "柱"], [2, "构造柱"], [2, "砌体柱"],
  [1, "墙"], [2, "剪力墙"], [2, "人防门框墙"], [2, "砌体墙"], [2, "砌体加筋"], [2, "保温层"], [2, "暗梁"], [2, "墙垛"], [2, "幕墙"],
  [1, "门窗洞"], [2, "门"], [2, "窗"], [2, "门联窗"], [2, "墙洞"], [2, "带形窗"], [2, "带形洞"], [2, "飘窗"], [2, "老虎窗"], [2, "过梁"], [2, "壁龛"],
  [1, "梁"], [2, "梁"], [2, "连梁"], [2, "圈梁"], [1, "板"], [2, "现浇板"], [2, "螺旋板"], [2, "柱帽"],
];

function RightPanel() {
  return (
    <div className="flex-1 bg-[#f0f0f0] text-[13px] text-[#333] overflow-hidden border-l border-[#ccc]">
      <div className="h-[11px] bg-[#d2d4d9]" />
      <div className="h-[22px] pl-[8px] font-bold text-[#777] leading-[22px] whitespace-nowrap border-b border-[#ddd]">显示设置</div>
      <div className="h-[26px] mt-[6px] ml-[2px] pl-[7px] bg-white border border-b-0 border-[#ddd] text-[#2a62c4] leading-[24px] whitespace-nowrap">图元显示</div>
      <div className="ml-[2px] border border-[#ccc] bg-white">
        <div className="h-[23px] bg-[#f0f0f0] pl-[36px] leading-[23px] whitespace-nowrap w-[200px] border-b border-[#d8d8d8]">图层构件</div>
        {LAYERS.map((l, i) => (
          <div key={i} className="h-[21px] flex items-center whitespace-nowrap border-b border-[#d8d8d8] relative">
            {l[0] < 2 ? (
              <span className={`absolute top-[3px] w-[13px] h-[14px] border border-[#999] bg-[#eee] rounded-sm flex items-center justify-center text-[#444] leading-none ${l[0] === 0 ? "left-[2px]" : "left-[12px]"}`}>−</span>
            ) : (
              <>
                <span className="absolute left-[18px] w-[18px] border-t border-[#aaa]" />
                <span className="absolute left-[18px] top-0 bottom-0 border-l border-[#aaa]" />
              </>
            )}
            {l[0] > 0 && <span className="absolute left-0 top-0 bottom-0 w-[10px] border-r border-[#d8d8d8]" />}
            <span className={l[0] === 0 ? "ml-[21px]" : l[0] === 1 ? "ml-[31px]" : "ml-[41px]"}>{l[1]}</span>
          </div>
        ))}
      </div>
    </div>
  );
}

export default function App() {
  return (
    <div className="relative w-[1482px] h-[1030px] overflow-hidden bg-white text-[12px] font-['Noto_Sans','Noto_Sans_CJK_SC',sans-serif]">
      {/* menu tabs */}
      <div className="h-[25px] flex items-end border-b border-[#d8d8d8] text-[#444] relative leading-[18px]">
        <span className="w-[30px] -ml-[7px] pr-[7px] box-content whitespace-nowrap">设置</span>
        <span className="w-[50px] h-[19px] bg-[#4a9ff0] rounded-t text-white text-center leading-[21px]">建模</span>
        <span className="ml-[13px]">视图</span>
        <span className="ml-[26px]">工具</span>
        <span className="ml-[26px]">工程量</span>
        <span className="ml-[26px]">云应用</span>
        <div className="absolute left-[1308px] top-[6px] w-[190px] h-[18px] border border-[#ccc] text-[#bbb] pl-[2px] leading-[16px] whitespace-nowrap">可以合并不同工程的楼层及构件类型</div>
      </div>
      <Ribbon />
      <div className="h-[29px] bg-[#c9ccd1] flex items-center gap-[7px] text-[#333]">
        <div className="-ml-[2px]"><Select w={65} t="" /></div>
        <Select w={98} t="梁" />
        <Select w={98} t="KL1(1)" />
        <Select w={98} t="分层1" />
        <Ic n="check" />
        <span className="-ml-[1px]">显示梁平法表格</span>
        <span className="ml-[14px]">备注：勾选即显示，不勾选即隐藏</span>
      </div>
      <div className="flex h-[878px]">
        <div className="w-[26px] border-r border-[#ccc] shrink-0">
          <div className="w-[22px] h-[25px] border border-[#9cc2ea] rounded-r flex items-center justify-center">
            <svg width="15" height="13" viewBox="0 0 15 13"><rect x="0.5" y="0.5" width="14" height="12" fill="#fff" stroke={BLUE} /><rect x="0.5" y="0.5" width="14" height="4" fill={BLUE} /><path d="M3 7h6M3 10h6" stroke={BLUE} /></svg>
          </div>
          <div className="mt-[344px] h-[20px] bg-[#c5d6ec]" />
        </div>
        <div className="w-[4px] shrink-0" />
        <div className="w-[361px] shrink-0 flex flex-col">
          <ListPanel />
          <div className="h-[5px] shrink-0" />
          <PropPanel />
        </div>
        <div className="w-[4px] bg-[#bdbfc3] shrink-0" />
        <div className="w-[1032px] shrink-0 flex flex-col relative">
          <CadCanvas />
          <div className="h-[4px] bg-white flex justify-center shrink-0">
            <div className="w-[100px] h-[4px] bg-[#6b7480]" />
          </div>
          <BeamTable />
          <Popup />
        </div>
        <div className="w-[4px] shrink-0">
          <div className="mt-[275px] h-[100px] bg-[#748190]" />
        </div>
        <RightPanel />
      </div>
      {/* annotations: red boxes and magenta arrows drawn over the page */}
      <div className="absolute left-[70px] top-[265px] w-[165px] h-[63px] border-[7px] border-[#fb3a3a]" />
      <div className="absolute left-[599px] top-[383px] w-[519px] h-[245px] border-[7px] border-[#fb3a3a]" />
      <div className="absolute left-[780px] top-[524px] w-[202px] h-[38px] border-[7px] border-[#fb3a3a]" />
      <div className="absolute left-[961px] top-[881px] w-[96px] h-[118px] border-[7px] border-[#fb3a3a]" />
      <svg width="1482" height="1030" className="absolute inset-0 pointer-events-none">
        <polygon points="297,293 572,393 598,395 604,412 578,416 566,405" fill="#f022f0" />
        <polygon points="264,321 907,850 922,853 923,878 896,873 895,860" fill="#f022f0" />
      </svg>
    </div>
  );
}
